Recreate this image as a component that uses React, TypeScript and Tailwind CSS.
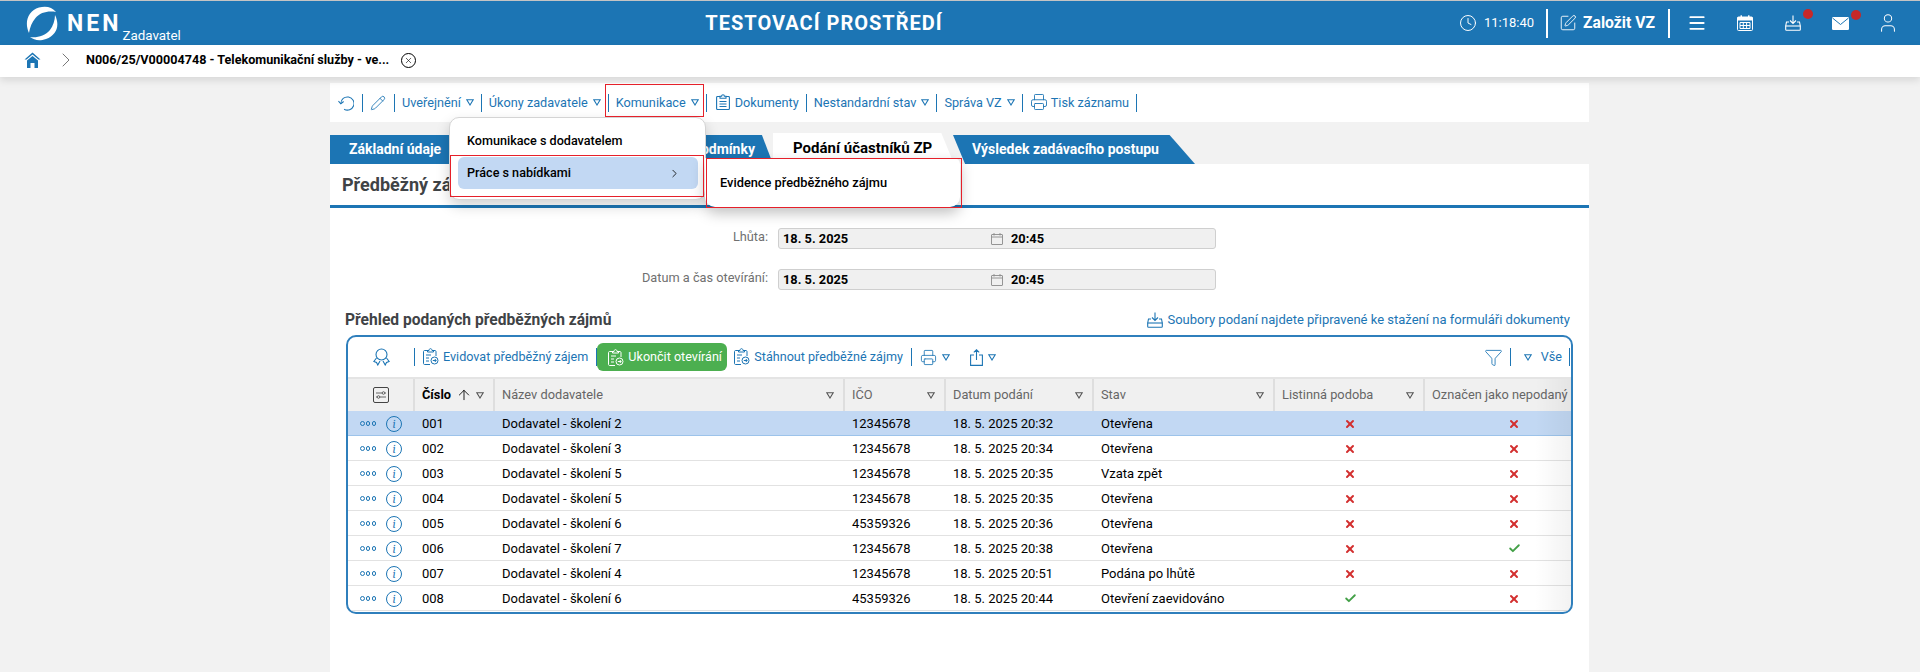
import { ArrowUp, Check, ChevronRight, Clock, Funnel, Menu, Pencil, Printer, SquarePen, User, X } from 'lucide-react';
import type { ReactNode } from 'react';

const blue = '#1c75b4';

const rows = [
  { no: '001', name: 'Dodavatel - školení 2', ico: '12345678', date: '18. 5. 2025 20:32', state: 'Otevřena', paper: false, undelivered: false },
  { no: '002', name: 'Dodavatel - školení 3', ico: '12345678', date: '18. 5. 2025 20:34', state: 'Otevřena', paper: false, undelivered: false },
  { no: '003', name: 'Dodavatel - školení 5', ico: '12345678', date: '18. 5. 2025 20:35', state: 'Vzata zpět', paper: false, undelivered: false },
  { no: '004', name: 'Dodavatel - školení 5', ico: '12345678', date: '18. 5. 2025 20:35', state: 'Otevřena', paper: false, undelivered: false },
  { no: '005', name: 'Dodavatel - školení 6', ico: '45359326', date: '18. 5. 2025 20:36', state: 'Otevřena', paper: false, undelivered: false },
  { no: '006', name: 'Dodavatel - školení 7', ico: '12345678', date: '18. 5. 2025 20:38', state: 'Otevřena', paper: false, undelivered: true },
  { no: '007', name: 'Dodavatel - školení 4', ico: '12345678', date: '18. 5. 2025 20:51', state: 'Podána po lhůtě', paper: false, undelivered: false },
  { no: '008', name: 'Dodavatel - školení 6', ico: '45359326', date: '18. 5. 2025 20:44', state: 'Otevření zaevidováno', paper: true, undelivered: false },
];

const Sep = () => <span className="h-[18px] w-px shrink-0 bg-[#1c75b4]" />;

const Tri = ({ color = blue }: { color?: string }) => (
  <svg width="8" height="7" viewBox="0 0 8 7" className="shrink-0">
    <path d="M0.8 0.8H7.2L4 6Z" fill="none" stroke={color} strokeWidth="1.1" />
  </svg>
);

const Logo = () => (
  <svg width="32" height="35" viewBox="0 0 32 35" className="shrink-0">
    <path d="M3 27C-2 16 2 5 13 1.5C20 -0.5 26 1 30 6C22 4.5 14 6.5 9.5 12C6 16 4 21 3 27Z" fill="white" />
    <path d="M29 9C34 19 31 29 20 33C13 35.5 8 34 4 31C11 32 19 30 24 24C27 20 29 14 29 9Z" fill="white" />
  </svg>
);

const HomeIcon = () => (
  <svg width="17" height="16" viewBox="0 0 17 16">
    <path d="M8.5 0.5L0.5 7.5H2.5L8.5 2.5L14.5 7.5H16.5Z" fill={blue} />
    <path d="M3 8.5L8.5 4L14 8.5V16H10.5V11H6.5V16H3Z" fill={blue} />
  </svg>
);

const TrayDown = ({ color, size = 16 }: { color: string; size?: number }) => (
  <svg width={size} height={size} viewBox="0 0 16 16" fill="none" stroke={color} strokeWidth="1.1">
    <path d="M8 0.5V8M5 5.5L8 8.5L11 5.5" />
    <path d="M4 7H1.5L0.7 11V14.5C0.7 15 1 15.3 1.5 15.3H14.5C15 15.3 15.3 15 15.3 14.5V11L14.5 7H12" />
    <path d="M0.7 11H15.3" />
  </svg>
);

const CalendarGrid = () => (
  <svg width="16" height="16" viewBox="0 0 16 16">
    <rect x="0.5" y="2" width="15" height="13.5" rx="1" fill="none" stroke="white" strokeWidth="1" />
    <rect x="0.5" y="2" width="15" height="3.5" fill="white" />
    <rect x="3.5" y="0.3" width="1.5" height="3" fill="white" />
    <rect x="11" y="0.3" width="1.5" height="3" fill="white" />
    <path d="M3 7.5H13V13.5H3Z M6.3 7.5V13.5 M9.6 7.5V13.5 M3 10.5H13" fill="none" stroke="white" strokeWidth="1" />
  </svg>
);

const MailIcon = () => (
  <svg width="17" height="13" viewBox="0 0 17 13">
    <rect width="17" height="13" rx="1.2" fill="white" />
    <path d="M0.5 1L8.5 7.5L16.5 1" fill="none" stroke={blue} strokeWidth="1" />
  </svg>
);

const SmallCalendar = () => (
  <svg width="12" height="12" viewBox="0 0 12 12" fill="none" stroke="#8a8a8a" strokeWidth="0.9" className="shrink-0">
    <rect x="0.5" y="1.5" width="11" height="10" rx="0.5" />
    <path d="M0.5 4H11.5M3 0V2.5M9 0V2.5" />
  </svg>
);

const UndoRing = () => (
  <svg width="16" height="16" viewBox="0 0 17 16" fill="none" stroke={blue} strokeWidth="1.1" className="shrink-0">
    <path d="M3 8.5A7 7 0 1 1 6.5 14.6" />
    <path d="M0.5 6L3 8.8L6 6.4" />
  </svg>
);

const ClipGear = ({ color = blue }: { color?: string }) => (
  <svg width="16" height="17" viewBox="0 0 16 17" fill="none" stroke={color} strokeWidth="1" className="shrink-0">
    <path d="M5 2.5H1.5C1 2.5 0.5 3 0.5 3.5V15.5C0.5 16 1 16.5 1.5 16.5H7M10 2.5H12C12.5 2.5 13 3 13 3.5V8" />
    <path d="M4.5 4V2.5H6C6 0 9 0 9 2.5H10.5V4Z" />
    <path d="M3 7H8M3 10H6M3 13H6" />
    <circle cx="11.5" cy="12.5" r="3.5" />
    <path d="M9.8 12.5H13M11.8 11L13.2 12.5L11.8 14" />
  </svg>
);

const Award = () => (
  <svg width="17" height="18" viewBox="0 0 17 18" fill="none" stroke={blue} strokeWidth="1.1" className="shrink-0">
    <circle cx="8.5" cy="6.5" r="5.5" />
    <path d="M3.5 10L0.8 13.5L3.5 14.5L4.8 17L7 13M13.5 10L16.2 13.5L13.5 14.5L12.2 17L10 13" />
  </svg>
);

const ShareIcon = () => (
  <svg width="13" height="17" viewBox="0 0 13 17" fill="none" stroke={blue} strokeWidth="1.1" className="shrink-0">
    <path d="M4 6H0.6V16.4H12.4V6H9M6.5 11V0.8M3.8 3.4L6.5 0.8L9.2 3.4" />
  </svg>
);

const DocIcon = () => (
  <svg width="14" height="16" viewBox="0 0 14 16" fill="none" stroke={blue} strokeWidth="1.1" className="shrink-0">
    <path d="M4 2.5H1.5C1 2.5 0.6 2.9 0.6 3.4V14.6C0.6 15.1 1 15.5 1.5 15.5H12.5C13 15.5 13.4 15.1 13.4 14.6V3.4C13.4 2.9 13 2.5 12.5 2.5H10" />
    <path d="M4 4.2V2.3H5.6C5.6 0.2 8.4 0.2 8.4 2.3H10V4.2Z" />
    <path d="M3.5 7.5H10.5M3.5 10H10.5M3.5 12.5H10.5" />
  </svg>
);

const InfoIcon = () => (
  <span className="flex h-[16px] w-[16px] shrink-0 items-center justify-center rounded-full border border-[#1c75b4] font-serif text-[12px] italic leading-none text-[#1c75b4]">
    i
  </span>
);

const Dots = () => (
  <span className="flex w-[16px] shrink-0 justify-between">
    <span className="h-[4.5px] w-[4.5px] rounded-full border border-[#1c75b4]" />
    <span className="h-[4.5px] w-[4.5px] rounded-full border border-[#1c75b4]" />
    <span className="h-[4.5px] w-[4.5px] rounded-full border border-[#1c75b4]" />
  </span>
);

const Flag = ({ on }: { on: boolean }) =>
  on ? <Check size={13} strokeWidth={3.4} color="#43a047" /> : <X size={12} strokeWidth={4} color="#d32f2f" />;

const ToolLink = ({ children, menu }: { children: ReactNode; menu?: boolean }) => (
  <span className="flex items-center gap-[5px] whitespace-nowrap text-[12.7px] text-[#1c75b4]">
    {children}
    {menu && <Tri />}
  </span>
);

const HeadCell = ({ label, bold, noFilter }: { label: string; bold?: boolean; noFilter?: boolean }) => (
  <div className="flex items-center justify-between overflow-hidden border-l-2 border-[#dedede] pl-[7px] pr-[9px]">
    <span className={bold ? 'flex items-center gap-[5px] whitespace-nowrap font-bold text-black' : 'whitespace-nowrap text-[#666666]'}>
      {label}
      {bold && <ArrowUp size={16} strokeWidth={1.3} />}
    </span>
    {!noFilter && <Tri color="#555555" />}
  </div>
);

const FormRow = ({ label }: { label: string }) => (
  <div className="flex h-[21px] items-center">
    <span className="w-[439px] pb-[3px] pr-px text-right text-[12.75px] text-[#707070]">{label}</span>
    <div className="ml-[9px] flex h-[21px] w-[438px] items-center rounded-[3px] border border-[#cfcfcf] bg-[#f0f0f0] pl-[4px] text-[12.8px] font-bold text-black">
      <span className="w-[208px]">18. 5. 2025</span>
      <SmallCalendar />
      <span className="ml-[8px]">20:45</span>
    </div>
  </div>
);

export default function App() {
  return (
    <div className="relative h-[672px] w-[1920px] overflow-hidden bg-[#f2f2f2] [font-family:Roboto,sans-serif]">
      {/* Top bar */}
      <header className="flex h-[45px] items-center border-t border-[#c4c4c4] bg-[#1c75b4] text-white">
        <div className="flex w-[601px] shrink-0 items-center pl-[26px]">
          <Logo />
          <span className="ml-[9px] text-[23px] font-bold leading-none tracking-[3px]">NEN</span>
          <span className="ml-[1px] mt-[25px] text-[13.4px] leading-none">Zadavatel</span>
        </div>
        <div className="w-[446px] shrink-0 text-center text-[20px] font-bold tracking-[1px]">TESTOVACÍ PROSTŘEDÍ</div>
        <div className="ml-[412px] flex items-center">
          <Clock size={18} strokeWidth={1.3} />
          <span className="ml-[7px] w-[49px] whitespace-nowrap text-[13px]">11:18:40</span>
          <span className="ml-[13px] h-[29px] w-[2px] bg-white" />
          <SquarePen size={18} strokeWidth={1.2} className="ml-[11px]" />
          <span className="ml-[6px] w-[72px] whitespace-nowrap text-[15.7px] font-bold">Založit VZ</span>
          <span className="ml-[13px] h-[29px] w-[2px] bg-white" />
          <Menu size={20} strokeWidth={2.2} className="ml-[17px]" />
          <span className="ml-[30px]"><CalendarGrid /></span>
          <span className="relative ml-[32px]">
            <TrayDown color="white" />
            <span className="absolute left-[18px] top-[-6px] h-[10px] w-[10px] rounded-full bg-[#c62828]" />
          </span>
          <span className="relative ml-[31px] flex">
            <MailIcon />
            <span className="absolute left-[19px] top-[-7px] h-[10px] w-[10px] rounded-full bg-[#c62828]" />
          </span>
          <User size={22} strokeWidth={1.1} className="ml-[28px]" />
        </div>
      </header>

      {/* Breadcrumb */}
      <div className="relative flex h-[32px] items-center bg-white pb-[2px] pl-[24px] shadow-[0_3px_8px_rgba(0,0,0,0.12)]">
        <HomeIcon />
        <ChevronRight size={24} strokeWidth={0.8} color="#555555" className="ml-[13px]" />
        <span className="ml-[8px] whitespace-nowrap text-[12.6px] font-bold text-black">N006/25/V00004748 - Telekomunikační služby - ve...</span>
        <span className="ml-[12px] flex h-[15px] w-[15px] items-center justify-center rounded-full border border-black">
          <X size={9} strokeWidth={1.6} color="black" />
        </span>
      </div>

      <main className="ml-[330px] w-[1259px]">
        {/* Toolbar */}
        <div className="mt-[6px] flex h-[39px] items-center gap-[7px] bg-white pl-[8px]">
          <span className="flex items-center gap-[7.5px] pr-[1px]">
            <UndoRing />
            <Sep />
            <Pencil size={16} strokeWidth={1.3} color={blue} />
          </span>
          <Sep />
          <ToolLink menu>Uveřejnění</ToolLink>
          <Sep />
          <ToolLink menu>Úkony zadavatele</ToolLink>
          <Sep />
          <ToolLink menu>Komunikace</ToolLink>
          <Sep />
          <span className="ml-[2px] flex items-center gap-[5px] text-[12.7px] text-[#1c75b4]">
            <DocIcon />
            Dokumenty
          </span>
          <Sep />
          <ToolLink menu>Nestandardní stav</ToolLink>
          <Sep />
          <ToolLink menu>Správa VZ</ToolLink>
          <Sep />
          <span className="flex items-center gap-[3px] text-[12.7px] text-[#1c75b4]">
            <Printer size={18} strokeWidth={1.2} />
            Tisk záznamu
          </span>
          <Sep />
        </div>

        {/* Tabs */}
        <div className="mt-[11px] flex h-[31px] items-end">
          <div className="flex h-[29px] w-[126px] items-center bg-[#1c75b4] pl-[19px] text-[14px] font-bold text-white">Základní údaje</div>
          <div className="flex h-[29px] w-[317px] items-center justify-end bg-[#1c75b4] pr-[18px] text-[14px] font-bold text-white [clip-path:polygon(0_0,96.5%_0,100%_100%,0_100%)]">
            Zadávací podmínky
          </div>
          <div className="flex h-[31px] w-[181px] items-center bg-white pb-[1px] pl-[20px] text-[15px] font-bold text-black [clip-path:polygon(0_0,93%_0,100%_100%,0_100%)]">
            Podání účastníků ZP
          </div>
          <div className="-ml-[1px] flex h-[29px] w-[242px] items-center bg-[#1c75b4] pl-[19px] text-[14px] font-bold text-white [clip-path:polygon(0_0,89.5%_0,100%_100%,5%_100%)]">
            Výsledek zadávacího postupu
          </div>
        </div>

        {/* Panel */}
        <section className="h-[508px] bg-white">
          <div className="flex h-[44px] items-center border-b-[3px] border-[#1c75b4] pl-[12px] text-[18px] font-bold text-[#3f4346]">
            Předběžný zájem
          </div>
          <div className="mt-[20px] flex flex-col gap-[20px]">
            <FormRow label="Lhůta:" />
            <FormRow label="Datum a čas otevírání:" />
          </div>

          <div className="ml-[15px] mt-[20px] flex h-[22px] w-[1227px] items-center justify-between pr-[2px]">
            <span className="text-[15.6px] font-bold text-[#3f4346]">Přehled podaných předběžných zájmů</span>
            <span className="mb-[3px] flex items-center gap-[4px] text-[13px] text-[#1c75b4]">
              <TrayDown color={blue} />
              Soubory podaní najdete připravené ke stažení na formuláři dokumenty
            </span>
          </div>

          {/* Grid */}
          <div className="relative ml-[16px] mt-[3px] w-[1227px] overflow-hidden rounded-[10px] border-2 border-[#2f7fbc] pb-[1px]">
            <div className="flex h-[40px] items-center pr-[1px]">
              <span className="ml-[25px]"><Award /></span>
              <span className="ml-[24px] flex items-center gap-[8px]">
                <Sep />
                <span className="flex items-center gap-[4px] whitespace-nowrap text-[12.6px] text-[#1c75b4]">
                  <ClipGear />
                  Evidovat předběžný zájem
                </span>
                <Sep />
              </span>
              <span className="flex h-[28px] w-[130px] items-center gap-[4px] whitespace-nowrap rounded-[6px] bg-[#4caf50] pl-[11px] text-[12.6px] text-white">
                <ClipGear color="white" />
                Ukončit otevírání
              </span>
              <span className="ml-[7px] flex items-center gap-[4px] whitespace-nowrap text-[12.6px] text-[#1c75b4]">
                <ClipGear />
                Stáhnout předběžné zájmy
              </span>
              <span className="ml-[8px] flex items-center gap-[8px]">
                <Sep />
                <span className="flex items-center gap-[5px]">
                  <Printer size={17} strokeWidth={1.2} color={blue} />
                  <Tri />
                </span>
                <span className="ml-[1px]"><Sep /></span>
                <span className="ml-[3px] flex items-center gap-[5px]">
                  <ShareIcon />
                  <Tri />
                </span>
                <span className="ml-[2px]"><Sep /></span>
              </span>
              <span className="ml-auto flex items-center gap-[7px] text-[12.6px] text-[#1c75b4]">
                <Funnel size={19} strokeWidth={1.1} color={blue} />
                <Sep />
                <span className="ml-[6px]"><Tri /></span>
                <span className="ml-[2px]">Vše</span>
                <Sep />
              </span>
            </div>

            <div className="grid h-[34px] grid-cols-[65px_80px_350px_101px_148px_181px_150px_147px] border-t-2 border-[#e4e4e4] bg-[#f0f0f0] text-[12.8px]">
              <div className="flex items-center justify-center">
                <span className="flex h-[16px] w-[16px] items-center justify-center rounded-[2px] border border-[#444444]">
                  <svg width="12" height="10" viewBox="0 0 12 10" fill="none" stroke="#555555" strokeWidth="0.9">
                    <path d="M1 3H7M10 3H11M1 7H2M5 7H11" />
                    <circle cx="8.5" cy="3" r="1.3" />
                    <circle cx="3.5" cy="7" r="1.3" />
                  </svg>
                </span>
              </div>
              <HeadCell label="Číslo" bold />
              <HeadCell label="Název dodavatele" />
              <HeadCell label="IČO" />
              <HeadCell label="Datum podání" />
              <HeadCell label="Stav" />
              <HeadCell label="Listinná podoba" />
              <HeadCell label="Označen jako nepodaný" noFilter />
            </div>

            {rows.map((row, idx) => (
              <div
                key={row.no}
                className={`grid h-[25px] grid-cols-[65px_80px_350px_101px_148px_181px_150px_147px] items-center border-b pt-[1px] text-[13px] text-black ${
                  idx === 0 ? 'border-[#9cc3ea] bg-[#c2d8f3]' : 'border-[#e2e2e2]'
                }`}
              >
                <div className="flex items-center gap-[10px] pl-[12px]">
                  <Dots />
                  <InfoIcon />
                </div>
                <div className="pl-[9px]">{row.no}</div>
                <div className="pl-[9px]">{row.name}</div>
                <div className="pl-[9px]">{row.ico}</div>
                <div className="pl-[9px]">{row.date}</div>
                <div className="pl-[9px]">{row.state}</div>
                <div className="flex pl-[71px]"><Flag on={row.paper} /></div>
                <div className="flex pl-[85px]"><Flag on={row.undelivered} /></div>
              </div>
            ))}
            <div className="absolute bottom-0 right-0 top-[42px] w-[36px] bg-gradient-to-r from-transparent to-black/5" />
          </div>
        </section>
      </main>

      {/* Open menu */}
      <div className="absolute left-[449px] top-[117px] h-[83px] w-[257px] rounded-[10px] border border-[#d4d4d4] bg-white text-[12.6px] font-medium text-black shadow-[0_6px_14px_rgba(0,0,0,0.18)]">
        <div className="flex h-[39px] items-end pb-[6px] pl-[17px]">Komunikace s dodavatelem</div>
        <div className="ml-[8px] flex h-[32px] w-[240px] items-center justify-between rounded-[6px] bg-[#c2d8f3] pl-[9px] pr-[17px] pt-[1px]">
          Práce s nabídkami
          <ChevronRight size={13} strokeWidth={1.5} />
        </div>
      </div>
      <div className="absolute left-[705px] top-[158px] flex h-[49px] w-[255px] items-center rounded-b-[10px] rounded-tr-[6px] bg-white pl-[15px] text-[12.8px] font-medium text-black shadow-[0_6px_14px_rgba(0,0,0,0.25)]">
        Evidence předběžného zájmu
      </div>

      {/* Red highlights */}
      <div className="pointer-events-none absolute left-[605px] top-[84px] h-[33px] w-[99px] border border-[#e5202a]" />
      <div className="pointer-events-none absolute left-[450px] top-[155px] h-[42px] w-[254px] border border-[#e5202a]" />
      <div className="pointer-events-none absolute left-[706px] top-[158px] h-[50px] w-[256px] border border-[#e5202a]" />
    </div>
  );
}
